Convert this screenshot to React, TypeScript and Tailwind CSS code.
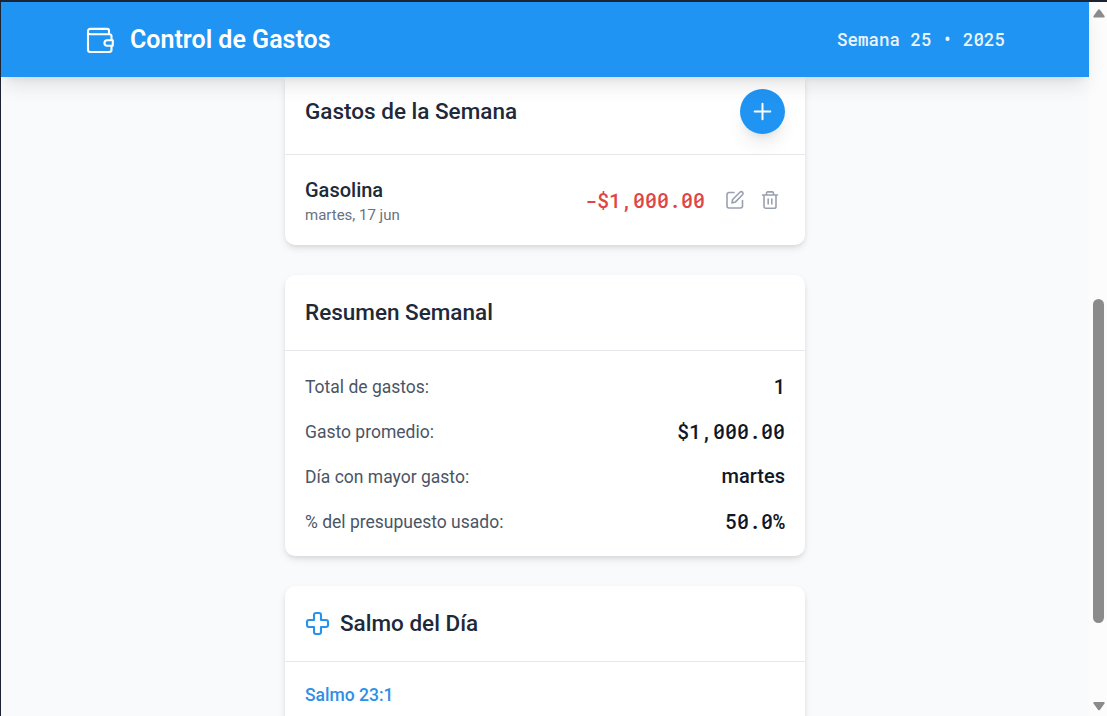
import React from "react";

const MONO = "font-['Roboto_Mono','Liberation_Mono',monospace]";

function WalletIcon() {
  return (
    <svg className="size-[30px]" viewBox="0 0 30 30" fill="none" stroke="currentColor" strokeWidth="2.100" strokeLinejoin="round" strokeLinecap="round">
      <path d="M24 9.300V5.700A1.800 1.800 0 0 0 22.200 3.900H5.200A2.200 2.200 0 0 0 3 6.100V24.800A2.200 2.200 0 0 0 5.200 27H24.300A2.200 2.200 0 0 0 26.500 24.800V20.700M26.500 15V11.500A2.200 2.200 0 0 0 24.300 9.300H5.200A2.200 2.200 0 0 1 3 7.500" />
      <path d="M27.800 15.200H22.200A2.750 2.750 0 0 0 22.200 20.700H27.800Z" />
    </svg>
  );
}

function PlusIcon() {
  return (
    <svg className="size-[25px]" viewBox="0 0 24 24" fill="none" stroke="currentColor" strokeWidth="1.900" strokeLinecap="round">
      <path d="M12 4.500v15M4.500 12h15" />
    </svg>
  );
}

function EditIcon() {
  return (
    <svg className="size-5" viewBox="0 0 20 20" fill="none" stroke="currentColor" strokeWidth="1.600" strokeLinecap="round" strokeLinejoin="round">
      <path d="M9 2.500H4A2 2 0 0 0 2 4.500V16A2 2 0 0 0 4 18H15.500A2 2 0 0 0 17.500 16V10.500" />
      <path d="M7 13L7.600 9.500L14.900 2.200A1.700 1.700 0 0 1 17.500 4.700L10.300 12.100Z" />
    </svg>
  );
}

function TrashIcon() {
  return (
    <svg className="size-5" viewBox="0 0 20 20" fill="none" stroke="currentColor" strokeWidth="1.600" strokeLinecap="round" strokeLinejoin="round">
      <path d="M2.500 5H17.500M4 5V16.500A1.800 1.800 0 0 0 5.800 18.300H14.200A1.800 1.800 0 0 0 16 16.500V5M6.500 5V3.200A1.300 1.300 0 0 1 7.800 1.900H12.200A1.300 1.300 0 0 1 13.500 3.200V5M8.200 9V14M11.800 9V14" />
    </svg>
  );
}

function CrossIcon() {
  return (
    <svg className="size-[25px] text-[#2693ee]" viewBox="0 0 25 25" fill="none" stroke="currentColor" strokeWidth="2.100" strokeLinejoin="round">
      <path d="M11 2H14A2 2 0 0 1 16 4V9H21A2 2 0 0 1 23 11V14A2 2 0 0 1 21 16H16V21A2 2 0 0 1 14 23H11A2 2 0 0 1 9 21V16H4A2 2 0 0 1 2 14V11A2 2 0 0 1 4 9H9V4A2 2 0 0 1 11 2Z" />
    </svg>
  );
}

const card = "shrink-0 rounded-[10px] bg-white shadow-[0_4px_8px_-1px_rgba(0,0,0,0.1),0_2px_5px_-1px_rgba(0,0,0,0.08)]";
const heading = "text-[22.5px] leading-[35px] font-medium text-gray-800";

const rows = [
  { label: "Total de gastos:", value: "1", mono: false },
  { label: "Gasto promedio:", value: "$1,000.00", mono: true },
  { label: "Día con mayor gasto:", value: "martes", mono: false },
  { label: "% del presupuesto usado:", value: "50.0%", mono: true },
];

export default function App() {
  return (
    <div className="flex h-[716px] w-[1107px] overflow-hidden border-t-2 border-l border-[#1c2433] bg-gray-50 font-['Roboto',sans-serif]">
      <div className="flex w-[1088px] flex-col">
        <header className="relative z-10 flex h-[75px] shrink-0 items-center justify-between bg-[#2094f3] px-[84px] text-white shadow-[0_12px_19px_-4px_rgba(0,0,0,0.1),0_5px_8px_-5px_rgba(0,0,0,0.1)]">
          <div className="flex items-center gap-[15px]">
            <WalletIcon />
            <h1 className="text-[25px] leading-[35px] font-semibold">Control de Gastos</h1>
          </div>
          <span className={`text-[17.5px] leading-[25px] font-medium opacity-90 ${MONO}`}>Semana 25 • 2025</span>
        </header>
        <main className="mx-auto flex min-h-0 w-[520px] flex-1 flex-col gap-[30px] overflow-visible">
          <section className={`${card} rounded-t-none`}>
            <div className="flex h-[78px] items-center justify-between border-b border-gray-200 px-5 pt-3 pb-5">
              <h2 className={heading}>Gastos de la Semana</h2>
              <button className="flex size-[45px] items-center justify-center rounded-full bg-[#2094f3] text-white shadow-[0_12px_19px_-4px_rgba(0,0,0,0.1),0_5px_8px_-5px_rgba(0,0,0,0.1)]">
                <PlusIcon />
              </button>
            </div>
            <div className="flex h-[90px] items-center justify-between px-5">
              <div>
                <p className="text-[20px] leading-[30px] font-medium text-gray-800">Gasolina</p>
                <p className="text-[15px] leading-5 text-gray-500">martes, 17 jun</p>
              </div>
              <div className="flex items-center text-gray-400">
                <span className={`mr-5 text-[20px] leading-[30px] font-medium text-[#e04545] ${MONO}`}>-$1,000.00</span>
                <button className="mr-[15px]"><EditIcon /></button>
                <button className="mr-[5px]"><TrashIcon /></button>
              </div>
            </div>
          </section>
          <section className={card}>
            <div className="border-b border-gray-200 p-5">
              <h2 className={heading}>Resumen Semanal</h2>
            </div>
            <div className="flex flex-col gap-[15px] p-5">
              {rows.map((r, i) => (
                <div key={r.label} className="flex h-[30px] items-center justify-between">
                  <span className="pt-0.5 text-[17.5px] leading-[25px] text-gray-600">{r.label}</span>
                  <span className={`text-[20px] leading-[30px] font-medium text-gray-900 ${r.mono ? MONO : ""} ${i === 0 ? "pt-0.5" : ""}`}>{r.value}</span>
                </div>
              ))}
            </div>
          </section>
          <section className={card}>
            <div className="flex items-center gap-2.5 border-b border-gray-200 p-5">
              <CrossIcon />
              <h2 className={heading}>Salmo del Día</h2>
            </div>
            <div className="px-5 pt-[21px] pb-5">
              <p className="text-[17.5px] leading-[25px] font-medium text-[#2e90e5]">Salmo 23:1</p>
            </div>
          </section>
        </main>
      </div>
      <div className="flex flex-1 flex-col items-center bg-[#fcfcfc] pt-1.5">
        <svg className="ml-px h-[10px] w-3" viewBox="0 0 12 10" fill="#8b8b8b"><path d="M5 1.800Q6 .700 7 1.800L11.500 8Q12 9.500 11 9.500H1Q0 9.500 .500 8Z" /></svg>
        <div className="mt-[281px] ml-px h-[324px] w-[11px] rounded-full bg-[#8b8b8b]" />
        <svg className="mt-[78px] ml-px h-[10px] w-3" viewBox="0 0 12 10" fill="#8b8b8b"><path d="M5 8.700Q6 9.800 7 8.700L11.500 2.500Q12 1 11 1H1Q0 1 .500 2.500Z" /></svg>
      </div>
    </div>
  );
}
